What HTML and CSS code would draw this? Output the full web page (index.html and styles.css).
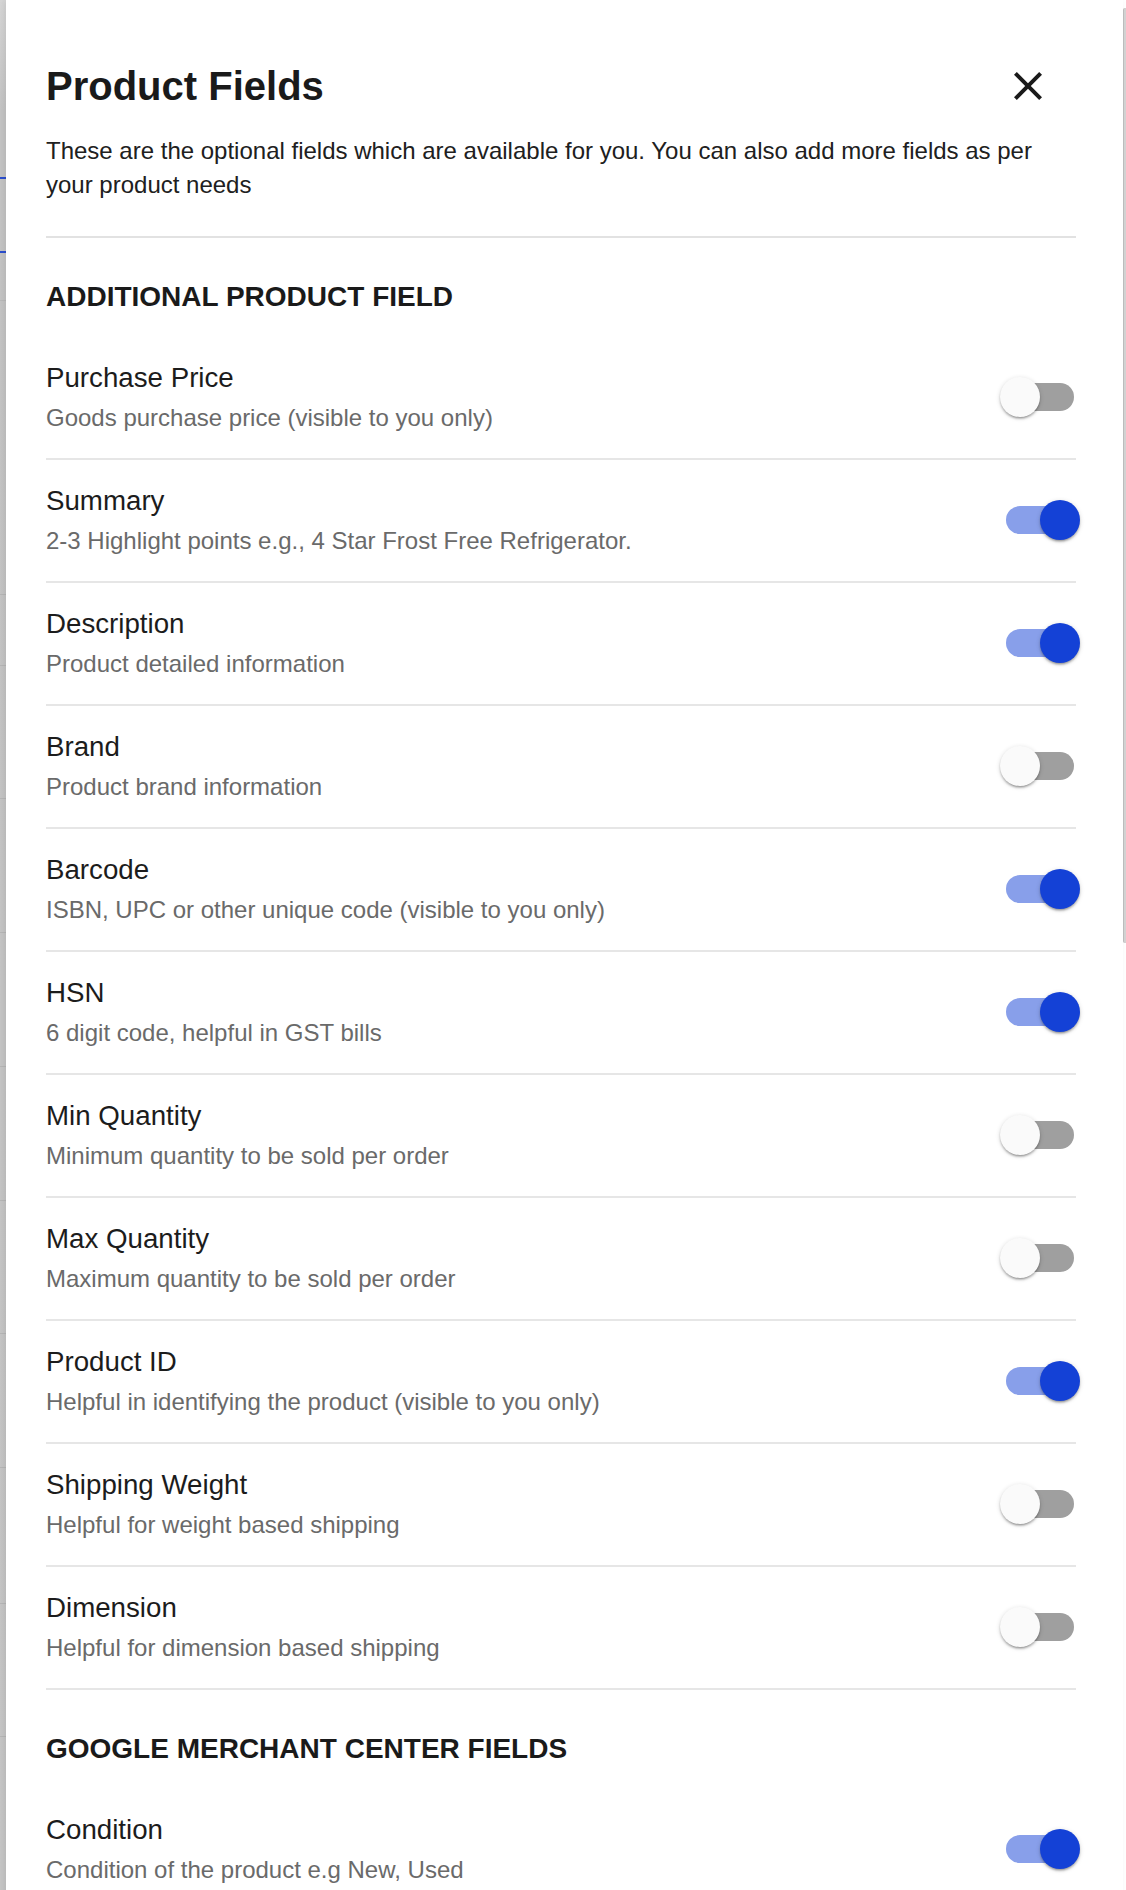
FILE: index.html
```html
<!DOCTYPE html>
<html lang="en">
<head>
<meta charset="utf-8">
<title>Product Fields</title>
<link rel="stylesheet" href="styles.css">
</head>
<body>
<div class="screen">
  <div class="backdrop"></div>
  <aside class="drawer">
    <header class="drawer-header">
      <div class="title-row">
        <h1 class="title">Product Fields</h1>
        <button class="close-btn" aria-label="Close">
          <svg viewBox="0 0 24 24" width="48" height="48"><path d="M19 6.41L17.59 5 12 10.59 6.41 5 5 6.41 10.59 12 5 17.59 6.41 19 12 13.41 17.59 19 19 17.59 13.41 12z"/></svg>
        </button>
      </div>
      <p class="intro">These are the optional fields which are available for you. You can also add more fields as per your product needs</p>
    </header>

    <section class="group">
      <h2 class="group-title">ADDITIONAL PRODUCT FIELD</h2>
      <div class="field"><div class="field-text"><div class="field-name">Purchase Price</div><div class="field-desc">Goods purchase price (visible to you only)</div></div><span class="switch" role="switch" aria-checked="false"><span class="track"></span><span class="thumb"></span></span></div>
      <div class="field"><div class="field-text"><div class="field-name">Summary</div><div class="field-desc">2-3 Highlight points e.g., 4 Star Frost Free Refrigerator.</div></div><span class="switch on" role="switch" aria-checked="true"><span class="track"></span><span class="thumb"></span></span></div>
      <div class="field"><div class="field-text"><div class="field-name">Description</div><div class="field-desc">Product detailed information</div></div><span class="switch on" role="switch" aria-checked="true"><span class="track"></span><span class="thumb"></span></span></div>
      <div class="field"><div class="field-text"><div class="field-name">Brand</div><div class="field-desc">Product brand information</div></div><span class="switch" role="switch" aria-checked="false"><span class="track"></span><span class="thumb"></span></span></div>
      <div class="field"><div class="field-text"><div class="field-name">Barcode</div><div class="field-desc">ISBN, UPC or other unique code (visible to you only)</div></div><span class="switch on" role="switch" aria-checked="true"><span class="track"></span><span class="thumb"></span></span></div>
      <div class="field"><div class="field-text"><div class="field-name">HSN</div><div class="field-desc">6 digit code, helpful in GST bills</div></div><span class="switch on" role="switch" aria-checked="true"><span class="track"></span><span class="thumb"></span></span></div>
      <div class="field"><div class="field-text"><div class="field-name">Min Quantity</div><div class="field-desc">Minimum quantity to be sold per order</div></div><span class="switch" role="switch" aria-checked="false"><span class="track"></span><span class="thumb"></span></span></div>
      <div class="field"><div class="field-text"><div class="field-name">Max Quantity</div><div class="field-desc">Maximum quantity to be sold per order</div></div><span class="switch" role="switch" aria-checked="false"><span class="track"></span><span class="thumb"></span></span></div>
      <div class="field"><div class="field-text"><div class="field-name">Product ID</div><div class="field-desc">Helpful in identifying the product (visible to you only)</div></div><span class="switch on" role="switch" aria-checked="true"><span class="track"></span><span class="thumb"></span></span></div>
      <div class="field"><div class="field-text"><div class="field-name">Shipping Weight</div><div class="field-desc">Helpful for weight based shipping</div></div><span class="switch" role="switch" aria-checked="false"><span class="track"></span><span class="thumb"></span></span></div>
      <div class="field"><div class="field-text"><div class="field-name">Dimension</div><div class="field-desc">Helpful for dimension based shipping</div></div><span class="switch" role="switch" aria-checked="false"><span class="track"></span><span class="thumb"></span></span></div>
    </section>

    <section class="group">
      <h2 class="group-title">GOOGLE MERCHANT CENTER FIELDS</h2>
      <div class="field"><div class="field-text"><div class="field-name">Condition</div><div class="field-desc">Condition of the product e.g New, Used</div></div><span class="switch on" role="switch" aria-checked="true"><span class="track"></span><span class="thumb"></span></span></div>
    </section>
  </aside>
  <div class="scrollbar"><div class="scroll-thumb"></div></div>
</div>
</body>
</html>
```
FILE: styles.css
```css
html, body {
  margin: 0;
  padding: 0;
  height: 100%;
  overflow: hidden;
  background: #ffffff;
}

body {
  font-family: "Liberation Sans", Arial, Helvetica, sans-serif;
  color: #1c1c1c;
}

.screen {
  display: flex;
  align-items: stretch;
  min-height: 100%;
}

.backdrop {
  flex: 0 0 6px;
  background:
    linear-gradient(to bottom,
      transparent 0, transparent 177px, #2c4fcf 177px, #2c4fcf 179px, transparent 179px,
      transparent 251px, #2c4fcf 251px, #2c4fcf 253px, transparent 253px,
      transparent 300px, #b9b9b9 300px, #b9b9b9 301px, transparent 301px,
      transparent 594px, #b6b6b6 594px, #b6b6b6 595px, transparent 595px,
      transparent 665px, #b6b6b6 665px, #b6b6b6 666px, transparent 666px,
      transparent 798px, #b6b6b6 798px, #b6b6b6 799px, transparent 799px,
      transparent 932px, #b6b6b6 932px, #b6b6b6 933px, transparent 933px,
      transparent 1066px, #b6b6b6 1066px, #b6b6b6 1067px, transparent 1067px,
      transparent 1200px, #b6b6b6 1200px, #b6b6b6 1201px, transparent 1201px,
      transparent 1333px, #b6b6b6 1333px, #b6b6b6 1334px, transparent 1334px,
      transparent 1467px, #b6b6b6 1467px, #b6b6b6 1468px, transparent 1468px,
      transparent 1603px, #b6b6b6 1603px, #b6b6b6 1604px, transparent 1604px,
      transparent 1736px, #b6b6b6 1736px, #b6b6b6 1737px, transparent 1737px),
    linear-gradient(to bottom, #d6d6d6 0, #c4c4c4 110px, #c6c6c6 100%);
}

.drawer {
  flex: 1 1 auto;
  padding: 0 47px 0 40px;
  background: #ffffff;
  box-shadow: -2px 0 6px rgba(0, 0, 0, 0.08);
}

.scrollbar {
  flex: 0 0 3px;
  padding-top: 8px;
}

.scroll-thumb {
  height: 935px;
  background: #d2d2d2;
  border-left: 1px solid #bcbcbc;
  border-radius: 2px 0 0 2px;
  box-sizing: border-box;
}

/* Header */
.drawer-header {
  padding: 62px 0 34px;
  border-bottom: 2px solid #e2e2e2;
}

.title-row {
  display: flex;
  align-items: center;
  justify-content: space-between;
}

.title {
  margin: 0;
  font-size: 40px;
  line-height: 48px;
  font-weight: 700;
  color: #1a1a1a;
}

.close-btn {
  width: 48px;
  height: 48px;
  margin-right: 24px;
  padding: 0;
  border: 0;
  background: transparent;
  display: flex;
}

.close-btn svg {
  fill: #1a1a1a;
}

.intro {
  margin: 24px 0 0;
  font-size: 24px;
  line-height: 34px;
  color: #202020;
}

/* Groups */
.group-title {
  margin: 0;
  padding: 42px 0 23px;
  font-size: 28px;
  line-height: 34px;
  font-weight: 700;
  color: #1a1a1a;
}

.field {
  display: flex;
  align-items: center;
  justify-content: space-between;
  padding: 24px 0 23px;
  border-bottom: 2px solid #e6e6e6;
}

.field-text {
  display: flex;
  flex-direction: column;
}

.field-name {
  font-size: 27.7px;
  line-height: 34px;
  color: #1c1c1c;
}

.field-desc {
  margin-top: 6px;
  font-size: 24px;
  line-height: 34px;
  color: #6a6a6a;
}

/* Switch */
.switch {
  position: relative;
  flex: 0 0 68px;
  width: 68px;
  height: 40px;
  margin: -3px 2px 0 0;
  display: flex;
  align-items: center;
}

.track {
  width: 68px;
  height: 28px;
  border-radius: 14px;
  background: #9f9f9f;
}

.thumb {
  position: absolute;
  top: 0;
  left: -6px;
  width: 40px;
  height: 40px;
  border-radius: 50%;
  background: #fafafa;
  box-shadow: 0 2px 2px rgba(0, 0, 0, 0.22), 0 1px 5px rgba(0, 0, 0, 0.14), 0 3px 1px -2px rgba(0, 0, 0, 0.12);
}

.switch.on .track {
  background: #889fea;
}

.switch.on .thumb {
  left: 34px;
  background: #1441d6;
}
```
